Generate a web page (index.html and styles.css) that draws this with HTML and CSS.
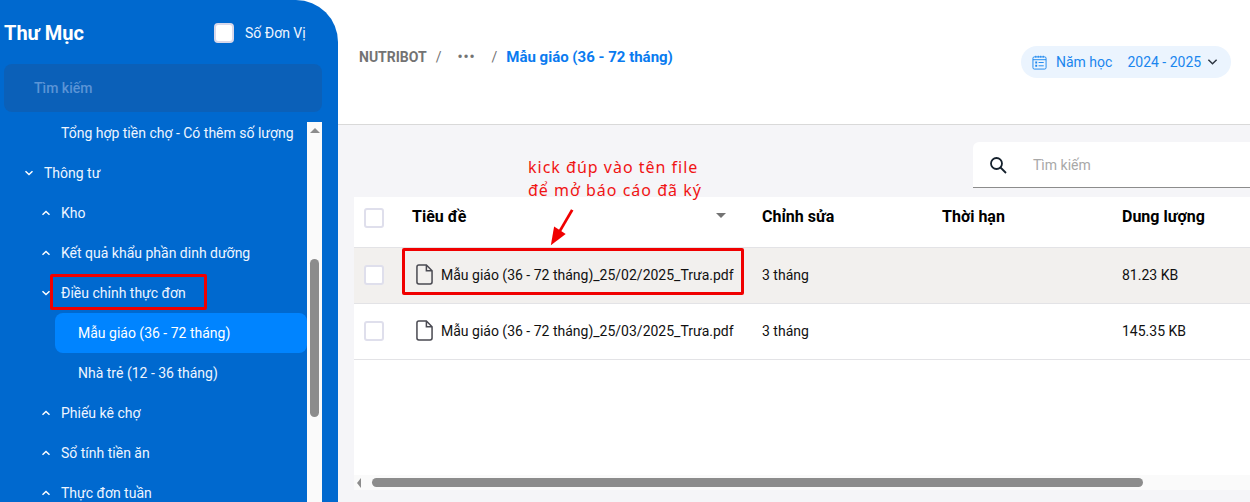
FILE: index.html
```html
<!DOCTYPE html>
<html lang="vi">
<head>
    <meta charset="UTF-8">
    <meta name="viewport" content="width=device-width, initial-scale=1.0">
    <title>NUTRIBOT - Thư Mục</title>
    <link rel="stylesheet" href="styles.css">
</head>
<body>
    <aside class="sidebar">
        <div class="sidebar-head">
            <h2>Thư Mục</h2>
            <label class="unit-check"><span class="check-white"></span>Số Đơn Vị</label>
        </div>
        <div class="sidebar-search">Tìm kiếm</div>
        <div class="tree-wrap">
            <ul class="tree">
                <li class="lv2">Tổng hợp tiền chợ - Có thêm số lượng</li>
                <li class="lv1"><svg class="chev" viewBox="0 0 10 6"><path d="M1.5 1.3 5 4.5l3.5-3.2"/></svg>Thông tư</li>
                <li class="lv2 has-chev"><svg class="chev" viewBox="0 0 10 6"><path d="M1.5 4.7 5 1.5l3.5 3.2"/></svg>Kho</li>
                <li class="lv2 has-chev"><svg class="chev" viewBox="0 0 10 6"><path d="M1.5 4.7 5 1.5l3.5 3.2"/></svg>Kết quả khẩu phần dinh dưỡng</li>
                <li class="lv2 has-chev"><svg class="chev" viewBox="0 0 10 6"><path d="M1.5 1.3 5 4.5l3.5-3.2"/></svg>Điều chỉnh thực đơn</li>
                <li class="lv3 active">Mẫu giáo (36 - 72 tháng)</li>
                <li class="lv3">Nhà trẻ (12 - 36 tháng)</li>
                <li class="lv2 has-chev"><svg class="chev" viewBox="0 0 10 6"><path d="M1.5 4.7 5 1.5l3.5 3.2"/></svg>Phiếu kê chợ</li>
                <li class="lv2 has-chev"><svg class="chev" viewBox="0 0 10 6"><path d="M1.5 4.7 5 1.5l3.5 3.2"/></svg>Sổ tính tiền ăn</li>
                <li class="lv2 has-chev"><svg class="chev" viewBox="0 0 10 6"><path d="M1.5 4.7 5 1.5l3.5 3.2"/></svg>Thực đơn tuần</li>
            </ul>
            <div class="vscroll">
                <span class="arrow-up"></span>
                <span class="vthumb"></span>
            </div>
        </div>
    </aside>

    <main class="main">
        <header class="topbar">
            <nav class="crumbs">
                <span class="crumb">NUTRIBOT</span>
                <span class="sep">/</span>
                <span class="dots">•••</span>
                <span class="sep">/</span>
                <span class="crumb-current">Mẫu giáo (36 - 72 tháng)</span>
            </nav>
            <div class="year-chip">
                <svg class="cal" viewBox="0 0 16 16">
                    <rect x="1" y="2" width="14" height="13" rx="1.5"/>
                    <path d="M1 5h14M4 .8v2M6.7.8v2M9.3.8v2M12 .8v2M7 8h5.5M7 11.500h5.500"/>
                    <path class="cal-dot" d="M3.500 7h2v2h-2zM3.500 10.500h2v2h-2z"/>
                </svg>
                <span class="chip-label">Năm học</span>
                <span class="chip-value">2024 - 2025</span>
                <svg class="chip-chev" viewBox="0 0 12 8"><path d="M1.500 1.500 6 6l4.500-4.500"/></svg>
            </div>
        </header>

        <section class="content">
            <div class="search-row">
                <div class="file-search">
                    <svg class="search-icon" viewBox="0 0 18 18"><circle cx="7.500" cy="7.500" r="5.500"/><path d="m11.500 11.500 5.500 5.500"/></svg>
                    <span>Tìm kiếm</span>
                </div>
            </div>
            <div class="table">
                <div class="row head">
                    <div class="cell-check"><span class="check"></span></div>
                    <div class="cell-title">Tiêu đề<span class="sort"></span></div>
                    <div>Chỉnh sửa</div>
                    <div>Thời hạn</div>
                    <div>Dung lượng</div>
                </div>
                <div class="row file hovered">
                    <div class="cell-check"><span class="check"></span></div>
                    <div class="cell-title">
                        <svg class="file-icon" viewBox="0 0 18 22"><path d="M3 1h8l6 6v12a2 2 0 0 1-2 2H3a2 2 0 0 1-2-2V3a2 2 0 0 1 2-2zM11 1v6h6"/></svg>
                        Mẫu giáo (36 - 72 tháng)_25/02/2025_Trưa.pdf
                    </div>
                    <div>3 tháng</div>
                    <div></div>
                    <div>81.23 KB</div>
                </div>
                <div class="row file">
                    <div class="cell-check"><span class="check"></span></div>
                    <div class="cell-title">
                        <svg class="file-icon" viewBox="0 0 18 22"><path d="M3 1h8l6 6v12a2 2 0 0 1-2 2H3a2 2 0 0 1-2-2V3a2 2 0 0 1 2-2zM11 1v6h6"/></svg>
                        Mẫu giáo (36 - 72 tháng)_25/03/2025_Trưa.pdf
                    </div>
                    <div>3 tháng</div>
                    <div></div>
                    <div>145.35 KB</div>
                </div>
                <div class="table-space"></div>
                <div class="hscroll">
                    <span class="arrow-left"></span>
                    <span class="hthumb"></span>
                </div>
            </div>
        </section>
    </main>

    <!-- chu thich mau do ve de len anh -->
    <div class="note">kick đúp vào tên file<br>để mở báo cáo đã ký</div>
    <div class="red-box box-menu"></div>
    <div class="red-box box-file"></div>
    <svg class="note-arrow" viewBox="0 0 30 42"><path class="shaft" d="M26 2 12 26"/><path class="head-tip" d="M3 40 6.500 20 19 28z"/></svg>
</body>
</html>
```

FILE: styles.css
```css
* {
    box-sizing: border-box;
}

html, body {
    height: 100%;
}

body {
    margin: 0;
    display: flex;
    overflow: hidden;
    background: white;
    font-family: Roboto, "Liberation Sans", sans-serif;
    font-size: 14px;
    color: #1a1a1a;
}

/* sidebar */
.sidebar {
    width: 338px;
    flex-shrink: 0;
    height: 502px;
    background: #0069cf;
    border-top-right-radius: 42px;
    color: white;
    padding-left: 4px;
    padding-right: 16px;
    display: flex;
    flex-direction: column;
}

.sidebar-head {
    height: 64px;
    display: flex;
    align-items: center;
    padding-top: 2px;
}

.sidebar-head h2 {
    margin: 0;
    font-size: 20px;
    font-weight: 700;
    width: 210px;
}

.unit-check {
    display: flex;
    align-items: center;
    gap: 11px;
    font-size: 14px;
    color: #eef5ff;
}

.check-white {
    width: 20px;
    height: 20px;
    background: white;
    border: 2px solid #d8d8ea;
    border-radius: 4px;
}

.sidebar-search {
    height: 48px;
    background: #0b60b8;
    border-radius: 8px;
    padding-left: 30px;
    line-height: 48px;
    color: #5b94d6;
    font-size: 14px;
    font-weight: 500;
    flex-shrink: 0;
}

.tree-wrap {
    margin-top: 10px;
    display: flex;
    flex: 1;
    min-height: 0;
}

/* danh sach dang cuon, hang dau bi che mat 9px */
.tree {
    list-style: none;
    margin: -9px 0 0;
    padding: 0;
    flex: 1;
    overflow: hidden;
}

.tree li {
    height: 40px;
    line-height: 40px;
    white-space: nowrap;
    color: #eef5ff;
    font-size: 14px;
    position: relative;
}

.lv1 {
    padding-left: 40px;
}

.lv2 {
    padding-left: 57px;
}

.lv3 {
    padding-left: 74px;
}

.tree li.active {
    margin-left: 51px;
    padding-left: 23px;
    background: #0084ff;
    border-radius: 8px;
    color: white;
}

.chev {
    width: 10px;
    height: 6px;
    fill: none;
    stroke: white;
    stroke-width: 1.5;
    position: absolute;
    top: 17px;
}

.lv1 .chev {
    left: 20px;
}

.lv2 .chev {
    left: 37px;
}

.vscroll {
    width: 15px;
    background: #fafafa;
    display: flex;
    flex-direction: column;
    align-items: center;
    padding-top: 6px;
}

.arrow-up {
    border-left: 5px solid transparent;
    border-right: 5px solid transparent;
    border-bottom: 5px solid #8c8c8c;
}

.vthumb {
    width: 9px;
    height: 158px;
    margin-top: 126px;
    background: #8c8c8c;
    border-radius: 5px;
}

/* main */
.main {
    flex: 1;
    min-width: 0;
    display: flex;
    flex-direction: column;
}

.topbar {
    height: 125px;
    flex-shrink: 0;
    background: white;
    border-bottom: 1px solid #d9d9d9;
    padding: 46px 19px 0 21px;
    display: flex;
    justify-content: space-between;
    align-items: flex-start;
}

.crumbs {
    display: flex;
    align-items: center;
    height: 22px;
    font-weight: 700;
    font-size: 14px;
}

.crumb {
    color: #737373;
}

.sep {
    color: #737373;
    font-weight: 400;
    margin-left: 9px;
}

.dots {
    color: #737373;
    font-size: 14px;
    letter-spacing: 1px;
    margin: 0 16px 0 16px;
}

.dots + .sep {
    margin-left: 0;
    margin-right: 9px;
}

.crumb-current {
    color: #0a7bf0;
    font-size: 15px;
}

.year-chip {
    width: 210px;
    height: 32px;
    background: #ebf4fe;
    border-radius: 16px;
    display: flex;
    align-items: center;
    padding-left: 11px;
    color: #1a86ee;
    font-size: 14px;
}

.cal {
    width: 15px;
    height: 15px;
    fill: none;
    stroke: #1a86ee;
    stroke-width: 1;
}

.cal .cal-dot {
    fill: #1a86ee;
    stroke: none;
}

.chip-label {
    margin-left: 9px;
}

.chip-value {
    margin-left: 15px;
}

.chip-chev {
    width: 11px;
    height: 8px;
    margin-left: 6px;
    fill: none;
    stroke: #2b3440;
    stroke-width: 1.6;
}

/* noi dung */
.content {
    flex: 1;
    min-height: 0;
    background: #f5f5f8;
    padding: 17px 0 12px 16px;
    display: flex;
    flex-direction: column;
}

.search-row {
    display: flex;
    justify-content: flex-end;
    flex-shrink: 0;
}

.file-search {
    width: 277px;
    height: 46px;
    background: white;
    border-bottom: 1px solid #8c8c8c;
    border-top-left-radius: 6px;
    display: flex;
    align-items: center;
    padding-left: 16px;
    color: #a8a8a8;
    font-size: 14px;
}

.search-icon {
    width: 18px;
    height: 18px;
    fill: none;
    stroke: #14202c;
    stroke-width: 1.8;
    margin-right: 26px;
}

.table {
    margin-top: 9px;
    flex: 1;
    min-height: 0;
    background: white;
    display: flex;
    flex-direction: column;
}

.row {
    display: grid;
    grid-template-columns: 58px 350px 180px 180px 1fr;
    align-items: center;
    border-bottom: 1px solid #e3e3e6;
    flex-shrink: 0;
}

.row.head {
    height: 51px;
    padding-bottom: 12px;
    font-size: 16px;
    font-weight: 700;
    color: #000;
}

.row.file {
    height: 56px;
    padding-bottom: 2px;
    font-size: 14px;
    color: #111;
}

.row.hovered {
    background: #f2f0ee;
}

.cell-check {
    padding-left: 10px;
    display: flex;
}

.row.head .cell-check {
    padding-top: 3px;
}

.check {
    width: 20px;
    height: 20px;
    background: white;
    border: 2px solid #dfdfec;
    border-radius: 3px;
}

.cell-title {
    display: flex;
    align-items: center;
    position: relative;
    white-space: nowrap;
}

.sort {
    position: absolute;
    right: 36px;
    top: 6px;
    border-left: 5px solid transparent;
    border-right: 5px solid transparent;
    border-top: 5px solid #737373;
}

.file-icon {
    width: 17px;
    height: 21px;
    margin: 0 8px 0 4px;
    fill: none;
    stroke: #4a4a52;
    stroke-width: 1.6;
}

.table-space {
    flex: 1;
}

.hscroll {
    height: 15px;
    background: #fafafa;
    display: flex;
    align-items: center;
    padding-left: 3px;
    flex-shrink: 0;
}

.arrow-left {
    border-top: 5px solid transparent;
    border-bottom: 5px solid transparent;
    border-right: 4px solid #8c8c8c;
}

.hthumb {
    width: 771px;
    height: 9px;
    margin-left: 11px;
    background: #8c8c8c;
    border-radius: 5px;
}

/* chu thich do */
.note {
    position: absolute;
    left: 528px;
    top: 156px;
    font-family: "Noto Sans", sans-serif;
    font-size: 16px;
    line-height: 23px;
    letter-spacing: 1px;
    color: #f01414;
    white-space: nowrap;
}

.red-box {
    position: absolute;
    border: 3px solid #f00000;
    border-radius: 2px;
}

.box-menu {
    left: 50px;
    top: 274px;
    width: 157px;
    height: 36px;
}

.box-file {
    left: 402px;
    top: 248px;
    width: 342px;
    height: 47px;
}

.note-arrow {
    position: absolute;
    left: 548px;
    top: 208px;
    width: 28px;
    height: 39px;
}

.note-arrow .shaft {
    stroke: #f00000;
    stroke-width: 3;
    fill: none;
}

.note-arrow .head-tip {
    fill: #f00000;
}
```
